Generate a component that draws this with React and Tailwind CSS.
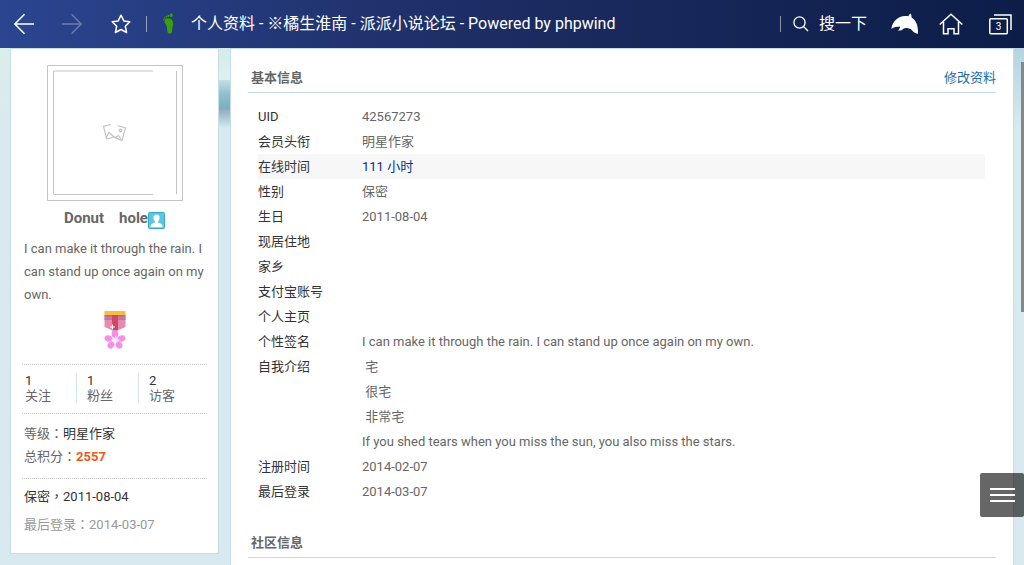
import React from 'react';

const stats = [
  { label: '关注', value: '1' },
  { label: '粉丝', value: '1' },
  { label: '访客', value: '2' },
];

const basicInfo = [
  { label: 'UID', value: '42567273' },
  { label: '会员头衔', value: '明星作家' },
  { label: '在线时间', value: '111 小时', active: true },
  { label: '性别', value: '保密' },
  { label: '生日', value: '2011-08-04' },
  { label: '现居住地', value: '' },
  { label: '家乡', value: '' },
  { label: '支付宝账号', value: '' },
  { label: '个人主页', value: '' },
  { label: '个性签名', value: 'I can make it through the rain. I can stand up once again on my own.' },
  {
    label: '自我介绍',
    value: '\u00a0宅\n\u00a0很宅\n\u00a0非常宅\nIf you shed tears when you miss the sun, you also miss the stars.',
  },
  { label: '注册时间', value: '2014-02-07' },
  { label: '最后登录', value: '2014-03-07' },
];

const BackIcon = ({ className }) => (
  <svg width="20" height="22" viewBox="0 0 20 22" fill="none" stroke="currentColor" strokeWidth="1.5" className={className}>
    <path d="M.8 11H20M10.500 1.200.8 11l9.700 9.800" />
  </svg>
);

const StarIcon = () => (
  <svg width="22" height="22" viewBox="0 0 22 22" fill="none" stroke="currentColor" strokeWidth="1.5" strokeLinejoin="round">
    <path d="m11 2.200 2.800 5.700 6 .9-4.500 4.400 1.300 6.300-5.600-3-5.600 3 1.300-6.300-4.500-4.400 6-.9z" />
  </svg>
);

const FootIcon = () => (
  <svg width="12" height="22" viewBox="0 0 12 22" fill="#37a107">
    <path d="M2 6.200C3.700 4.400 8 5 9.400 7.500c1.400 2.900.1 5.100-.1 7.500-.1 2 .3 5.600-2.400 5.700-3.200.1-2.600-3.900-2.800-6.200C3.900 12 .2 9 2 6.200z" />
    <ellipse cx="8.200" cy="2.200" rx="1.500" ry="1.900" />
    <circle cx="5.400" cy="3" r="1" />
    <circle cx="3.300" cy="3.800" r=".9" />
    <circle cx="1.600" cy="5" r=".8" />
    <circle cx=".8" cy="6.800" r=".7" />
  </svg>
);

const SearchIcon = () => (
  <svg width="16" height="16" viewBox="0 0 16 16" fill="none" stroke="currentColor" strokeWidth="1.3">
    <circle cx="6.500" cy="6.500" r="5.600" />
    <path d="m10.500 10.500 4.500 4.500" />
  </svg>
);

const DolphinIcon = () => (
  <svg width="28" height="22" viewBox="0 0 28 22" fill="currentColor">
    <path d="M.3 16C1.500 8.500 7 3 14 3c1.500 0 2.500.1 3.500.2.500-1.400 1-2.200 2-2.800.8 1 1.200 2.600 1 4C24.500 7 27.300 11 27 20.700c-1.500-.2-4-.7-5.200-2.400-1.200-1.700-2.800-3-5.800-3.300-1.500-.2-3 .2-4.500 1.400-1.200 1-3 1.300-4.500 1.100 1-1 1.900-2.400 2.100-4.100-3 .1-6.300.5-8.800 2.600z" />
  </svg>
);

const HomeIcon = () => (
  <svg width="24" height="22" viewBox="0 0 24 22" fill="none" stroke="currentColor" strokeWidth="1.500">
    <path d="M.7 11.500 12 1.200l11.300 10.300M4.500 9v11.800h4.500v-5h6v5h4.500V9" />
  </svg>
);

const TabsIcon = () => (
  <svg width="23" height="21" viewBox="0 0 23 21" fill="none" stroke="currentColor" strokeWidth="1.500">
    <rect x=".8" y="4.800" width="17.500" height="15" rx="1" />
    <path d="M5 1h17v15" />
    <text x="9.500" y="16" textAnchor="middle" fontSize="10" fill="currentColor" stroke="none">3</text>
  </svg>
);

const Avatar = () => (
  <svg width="136" height="136" viewBox="0 0 136 136" fill="none" stroke="#c4c4c4" className="mx-auto block">
    <path d="M.5.500h135v135H.5z" />
    <path d="M106 6H6.500v123.500H106M129.500 6v123" />
    <g strokeWidth="1.200">
      <path d="m64 59.500-7.500 1.800 3 12.500c3 .4 5-2.300 8-1.500 3 .7 4.500 2.700 7.500 3.200l3.500-12.500-8-2.500" />
      <path d="m59 73 3-5.500 4 3.500 2 1.500 3.500-2 3 4" />
      <circle cx="73.500" cy="65.500" r="1.300" />
    </g>
  </svg>
);

const MemberIcon = () => (
  <svg width="17" height="17" viewBox="0 0 17 17" className="mt-1">
    <rect x=".5" y=".5" width="16" height="16" rx="1" fill="#5cc5e6" stroke="#35a9ce" />
    <path d="M8.500 2.500c2 0 3.200 1.400 3.100 3.300 0 1.700-.8 2.800-1.500 3.600v1.200c1.800.6 4 1.300 4.400 3.400v1.200h-12V14c.4-2.100 2.600-2.800 4.400-3.400V9.400C6.200 8.600 5.400 7.500 5.400 5.800c-.1-1.900 1.100-3.300 3.100-3.300z" fill="#fff" />
  </svg>
);

const Medal = () => (
  <svg width="22" height="38" viewBox="0 0 22 38" className="mx-auto block">
    <path d="M.5 4h21v12L11 20.500.5 16z" fill="#e58bb0" />
    <path d="M.5 4h21v2.500H.5z" fill="#c9688c" />
    <path d="M.5 7h21v2H.5z" fill="#b87aa4" />
    <path d="M8 4h6v15l-3 1.500L8 19z" fill="#d2456b" />
    <path d="M.5 0h21v4H.5z" fill="#f7bd3f" />
    <g fill="#f58ee6">
      <ellipse cx="11" cy="23" rx="3.300" ry="4" />
      <ellipse cx="4.500" cy="27.500" rx="4" ry="3.100" transform="rotate(15 4.500 27.500)" />
      <ellipse cx="17.500" cy="27.500" rx="4" ry="3.100" transform="rotate(-15 17.500 27.500)" />
      <ellipse cx="7" cy="34" rx="3.200" ry="3.800" transform="rotate(35 7 34)" />
      <ellipse cx="15" cy="34" rx="3.200" ry="3.800" transform="rotate(-35 15 34)" />
    </g>
    <circle cx="11.500" cy="29" r="2.500" fill="#fbd3f1" />
    <path d="M11.500 25v8M7.500 29h8M8.500 13.500v5M6 16h5" stroke="#fff" strokeWidth="1" />
  </svg>
);

// full-width punctuation sits in the middle of its cell
const Mark = ({ children }) => <span className="leading-none font-['Noto_Sans_CJK_TC',sans-serif]">{children}</span>;

const TopBar = () => (
  <header className="h-12 shrink-0 flex items-center pl-3.5 pr-3 text-white bg-linear-to-r from-[#2b4590] via-[#1c2c62] to-[#0c1d48]">
    <button aria-label="后退"><BackIcon /></button>
    <button aria-label="前进" className="ml-7"><BackIcon className="rotate-180 opacity-30" /></button>
    <button aria-label="收藏" className="ml-7"><StarIcon /></button>
    <span className="ml-3.5 w-px h-4 bg-white/50" />
    <span className="ml-4"><FootIcon /></span>
    <h1 className="ml-4 flex-1 min-w-0 truncate text-base">个人资料 - ※橘生淮南 - 派派小说论坛 - Powered by phpwind</h1>
    <span className="w-px h-4 bg-white/50" />
    <button className="ml-3 flex items-center gap-2.5 text-base">
      <SearchIcon />
      搜一下
    </button>
    <button aria-label="浏览器" className="ml-6"><DolphinIcon /></button>
    <button aria-label="主页" className="ml-5"><HomeIcon /></button>
    <button aria-label="标签页" className="ml-[26px]"><TabsIcon /></button>
  </header>
);

const ProfileCard = () => (
  <aside className="w-[209px] shrink-0 self-start bg-white border border-[#c5dde8] px-[11px] pt-4 pb-3.5">
    <Avatar />
    <div className="mt-1.5 h-[22px] flex items-center justify-center text-[15px] font-bold whitespace-pre">
      Donut{'    '}hole
      <MemberIcon />
    </div>
    <p className="mt-2 px-0.5 leading-[23px]">I can make it through the rain. I can stand up once again on my own.</p>
    <div className="mt-[5px]"><Medal /></div>

    <ul className="mt-[15px] pt-2 pb-2.5 flex border-y border-dotted border-[#c4c4c4]">
      {stats.map((item, i) => (
        <li
          key={item.label}
          className={`leading-[15px] ${i === 0 ? 'w-[54px] pl-[3px]' : 'w-[62px] pl-2.5 border-l border-[#cfe4ec]'}`}
        >
          <a href="#" className="block">
            <span className="block text-[#333]">{item.value}</span>
            {item.label}
          </a>
        </li>
      ))}
    </ul>

    <div className="px-0.5 pt-2 pb-2.5 leading-[23px] border-b border-dotted border-[#c4c4c4]">
      <p>等级<Mark>：</Mark><span className="text-[#333]">明星作家</span></p>
      <p>总积分<Mark>：</Mark><b className="text-[#ec5a16]">2557</b></p>
    </div>

    <div className="px-0.5 pt-1 leading-7">
      <p className="text-[#333]">保密<Mark>，</Mark>2011-08-04</p>
      <p className="text-[#999]">最后登录<Mark>：</Mark>2014-03-07</p>
    </div>
  </aside>
);

const SectionTitle = ({ title, children }) => (
  <div className="h-11 pt-3.5 pl-[3px] flex items-center justify-between border-b border-[#c5dde3]">
    <h2 className="font-bold">{title}</h2>
    {children}
  </div>
);

const InfoPanel = () => (
  <main className="flex-1 min-w-0 bg-white border border-b-0 border-[#c5dde8] px-[17px]">
    <SectionTitle title="基本信息">
      <a href="#" className="text-[#1d6ba5]">修改资料</a>
    </SectionTitle>
    <div className="mt-[11px] ml-2.5 mr-[11px]">
      <table className="w-full leading-[25px]">
        <tbody>
          {basicInfo.map((row) => (
            <tr key={row.label} className={row.active ? 'bg-[#f7f7f7]' : ''}>
              <th scope="row" className="w-[104px] text-left align-top font-normal text-[#333]">{row.label}</th>
              <td className={`whitespace-pre-line ${row.active ? 'text-[#003388]' : ''}`}>{row.value}</td>
            </tr>
          ))}
        </tbody>
      </table>
    </div>
    <div className="mt-2.5">
      <SectionTitle title="社区信息" />
    </div>
  </main>
);

const App = () => (
  <div className="relative h-screen flex flex-col overflow-hidden bg-[#d8eaef] text-[13px] text-[#666] font-['Roboto','Noto_Sans_CJK_SC',sans-serif]">
    <TopBar />
    <div className="relative flex-1 min-h-0 flex px-2.5 overflow-hidden">
      {/* Landscape strip behind the cards */}
      <div className="absolute inset-x-0 top-0 h-20">
        <div className="h-8 bg-linear-to-b from-[#d3ece9] to-[#e0f0f2]" />
        <div className="h-7 bg-linear-to-b from-[#c3dfe4] via-[#8fc0cd] to-[#7ab0c1]" />
        <div className="h-5 bg-linear-to-b from-[#87a9bb] to-[#d8eaef]" />
      </div>
      <div className="absolute left-0 top-0 w-2.5 h-20 bg-linear-to-b from-[#daeeea] to-[#d8eaef]" />
      <div className="absolute right-0 top-0 w-2.5 h-20 bg-linear-to-b from-[#b4d4de] to-[#d8eaef]" />
      <div className="relative flex flex-1 min-w-0 gap-[11px]">
        <ProfileCard />
        <InfoPanel />
      </div>
    </div>

    <div className="absolute right-0 top-[62px] w-[3px] h-[250px] bg-[#82898b]" />
    <button
      aria-label="菜单"
      className="absolute right-0 bottom-12 w-11 h-11 rounded-xs bg-black/60 flex flex-col items-center justify-center gap-1"
    >
      <span className="w-[25px] h-0.5 bg-white" />
      <span className="w-[25px] h-0.5 bg-white" />
      <span className="w-[25px] h-0.5 bg-white" />
    </button>
  </div>
);

export default App;
